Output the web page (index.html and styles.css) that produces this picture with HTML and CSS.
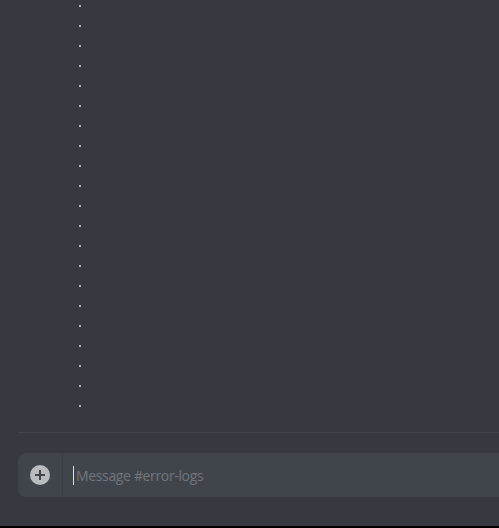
FILE: index.html
```html
<!DOCTYPE html>
<html>
<head>
<meta charset="utf-8">
<link rel="stylesheet" href="styles.css">
</head>
<body>
<div class="chat">
  <div class="messages">
    <span class="dot"></span><span class="dot"></span><span class="dot"></span>
    <span class="dot"></span><span class="dot"></span><span class="dot"></span>
    <span class="dot"></span><span class="dot"></span><span class="dot"></span>
    <span class="dot"></span><span class="dot"></span><span class="dot"></span>
    <span class="dot"></span><span class="dot"></span><span class="dot"></span>
    <span class="dot"></span><span class="dot"></span><span class="dot"></span>
    <span class="dot"></span><span class="dot"></span><span class="dot"></span>
  </div>
  <div class="divider"></div>
  <form class="composer">
    <button type="button" class="attach" aria-label="Upload">
      <svg width="20" height="20" viewBox="0 0 20 20">
        <circle cx="10" cy="10" r="10" fill="#b9bbbe"/>
        <path d="M10 5v10M5 10h10" stroke="#40444b" stroke-width="2"/>
      </svg>
    </button>
    <div class="field"><span class="caret"></span><span class="placeholder">Message #error-logs</span></div>
  </form>
</div>
<div class="bottom"></div>
</body>
</html>
```
FILE: styles.css
```css
html, body {
  margin: 0;
  padding: 0;
  background: #36393f;
  height: 528px;
  overflow: hidden;
  font-family: "Open Sans", "Noto Sans", sans-serif;
}
body {
  display: flex;
  flex-direction: column;
}
.chat {
  flex: 1;
  display: flex;
  flex-direction: column;
}
.messages {
  display: flex;
  flex-direction: column;
  gap: 18px;
  padding: 5px 0 0 79px;
  height: 432px;
  box-sizing: border-box;
}
.dot {
  width: 2px;
  height: 2px;
  background: #b8b4b0;
  display: block;
}
.divider {
  height: 1px;
  margin-left: 18px;
  background: #42454b;
}
.composer {
  margin: 20px 0 0 18px;
  height: 44px;
  background: #40444b;
  border-radius: 8px 0 0 8px;
  display: flex;
  align-items: center;
}
.attach {
  width: 45px;
  height: 44px;
  padding: 0 1px 0 0;
  margin: 0;
  border: none;
  background: transparent;
  display: flex;
  align-items: center;
  justify-content: center;
  border-right: 1px solid #3a3d43;
  box-sizing: border-box;
}
.attach svg { display: block; }
.field {
  display: flex;
  align-items: center;
  padding-left: 10px;
  height: 100%;
}
.caret {
  width: 1px;
  height: 19px;
  background: #dcddde;
  margin-right: 2px;
}
.placeholder {
  color: #72767d;
  font-size: 14px;
  letter-spacing: -0.35px;
}
.bottom {
  height: 2px;
  background: #000;
}
```
